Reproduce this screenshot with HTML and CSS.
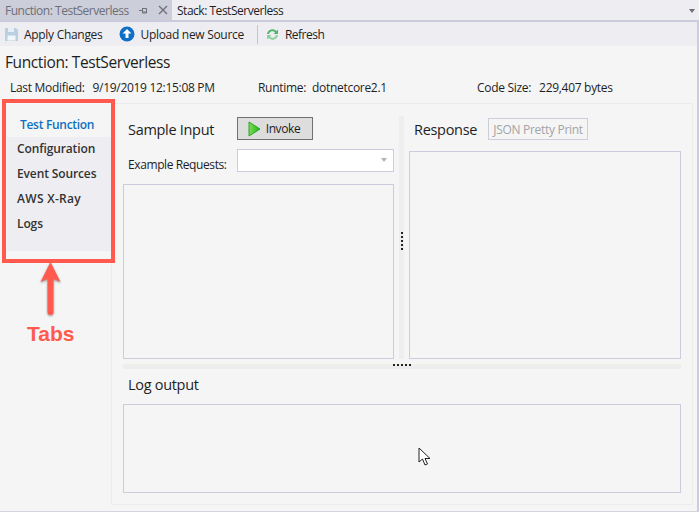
FILE: index.html
```html
<!DOCTYPE html>
<html lang="en">
<head>
    <meta charset="UTF-8">
    <meta name="viewport" content="width=device-width, initial-scale=1.0">
    <title>Function: TestServerless</title>
    <link rel="stylesheet" href="styles.css">
</head>
<body>
    <div class="tabstrip">
        <div class="doc-tab inactive">
            <span class="doc-tab-name">Function: TestServerless</span>
            <svg class="pin" width="9" height="9" viewBox="0 0 9 9"><path d="M0 4.500h3M3.500 2v5h4V2.500h-4M3.500 6h4" fill="none" stroke="#6d6e78"/></svg>
            <svg class="close" width="10" height="10" viewBox="0 0 10 10"><path d="M1 1l8 8M9 1l-8 8" stroke="#6d6e78" stroke-width="1.300"/></svg>
        </div>
        <div class="doc-tab active">Stack: TestServerless</div>
        <div class="strip-arrow"></div>
    </div>

    <div class="toolbar">
        <div class="tool disabled">
            <svg width="15" height="15" viewBox="0 0 15 15"><path d="M1 1h11l2 2v11H1z" fill="#b9cfe2"/><path d="M4 1h6v4H4z" fill="#e8eef4"/><path d="M3.500 8.500h8v5h-8z" fill="#f3f6f9"/></svg>
            <span>Apply Changes</span>
        </div>
        <div class="tool">
            <svg width="16" height="16" viewBox="0 0 16 16"><circle cx="8" cy="8" r="7.500" fill="#0f6fc6"/><path d="M8 3l4.500 4.500h-3V12h-3V7.500h-3z" fill="#fff"/></svg>
            <span>Upload new Source</span>
        </div>
        <div class="tool-sep"></div>
        <div class="tool">
            <svg width="15" height="15" viewBox="0 0 15 15"><path d="M2 7a5.500 5.500 0 0 1 9.500-3L13 2.500V7H8.500l1.600-1.600A3.500 3.500 0 0 0 4 7z" fill="#53b36b"/><path d="M13 8a5.500 5.500 0 0 1-9.500 3L2 12.500V8h4.500l-1.600 1.600A3.500 3.500 0 0 0 11 8z" fill="#8ccf9b"/></svg>
            <span class="refresh-label">Refresh</span>
        </div>
    </div>

    <div class="page">
        <h1 class="title">Function: TestServerless</h1>
        <div class="meta">
            <div class="meta-modified"><span class="meta-key">Last Modified:</span>9/19/2019 12:15:08 PM</div>
            <div class="meta-runtime"><span class="meta-key tight">Runtime:</span>dotnetcore2.1</div>
            <div class="meta-size"><span class="meta-key">Code Size:</span>229,407 bytes</div>
        </div>

        <div class="detail">
            <ul class="side-tabs">
                <li class="selected">Test Function</li>
                <li>Configuration</li>
                <li>Event Sources</li>
                <li class="xray">AWS X-Ray</li>
                <li>Logs</li>
            </ul>

            <div class="panel">
                <div class="panel-top">
                    <section class="input-col">
                        <div class="head-row">
                            <h2>Sample Input</h2>
                            <button class="invoke">
                                <svg width="13" height="16" viewBox="0 0 13 16"><defs><linearGradient id="play" x1="0" x2="1" y1="0" y2="0"><stop offset="0" stop-color="#7fdc5a"/><stop offset="1" stop-color="#19b51a"/></linearGradient></defs><path d="M1 1l11 7-11 7z" fill="url(#play)" stroke="#2aa51f"/></svg>
                                Invoke
                            </button>
                        </div>
                        <div class="example-row">
                            <label>Example Requests:</label>
                            <div class="combo"><i></i></div>
                        </div>
                        <div class="box grow"></div>
                    </section>
                    <div class="v-split"><div class="v-dots"></div></div>
                    <section class="response-col">
                        <div class="head-row">
                            <h2>Response</h2>
                            <button class="pretty">JSON Pretty Print</button>
                        </div>
                        <div class="box grow"></div>
                    </section>
                </div>
                <div class="h-split"><div class="h-dots"></div></div>
                <h2 class="log-title">Log output</h2>
                <div class="box log-box"></div>
            </div>
        </div>
    </div>

    <!-- annotation drawn over the screenshot -->
    <div class="callout"></div>
    <svg class="callout-arrow" width="24" height="54" viewBox="0 0 24 54"><path d="M12.500 0L2.500 20 9.500 17V50a3 3 0 0 0 6 0V17L22.500 20z" fill="#ff5a4d"/></svg>
    <div class="callout-label">Tabs</div>
    <svg class="cursor" width="13" height="20" viewBox="0 0 13 20"><path d="M1 1v14l3.500-3 2.500 6 2.500-1-2.500-5.500H12z" fill="#fff" stroke="#222"/></svg>
</body>
</html>
```

FILE: styles.css
```css
body {
    margin: 0;
    height: 512px;
    overflow: hidden;
    position: relative;
    display: flex;
    flex-direction: column;
    font-family: "Open Sans", "Noto Sans", sans-serif;
    font-size: 12px;
    letter-spacing: -0.3px;
    color: #1e1e1e;
    background-color: #f5f5f5;
    border-bottom: 1px solid #d4d4dc;
    box-sizing: border-box;
}
h1, h2, ul {
    margin: 0;
    padding: 0;
    font-weight: normal;
}
.tabstrip {
    display: flex;
    flex: none;
    height: 20px;
    background-color: #eeeef2;
    border-bottom: 2px solid #c9cbdc;
    position: relative;
}
.doc-tab {
    display: flex;
    align-items: center;
    height: 20px;
    box-sizing: border-box;
    letter-spacing: -0.48px;
}
.doc-tab.inactive {
    width: 172px;
    padding-left: 5px;
    background-color: #ccced9;
    color: #6d6e78;
}
.doc-tab-name {
    width: 134px;
}
.pin {
    margin-right: 10px;
}
.doc-tab.active {
    padding-left: 5px;
    background-color: #eeeef2;
}
.strip-arrow {
    position: absolute;
    right: 4px;
    top: 9px;
    border-top: 4px solid #6d6e78;
    border-left: 3.500px solid transparent;
    border-right: 3.500px solid transparent;
}
.toolbar {
    display: flex;
    align-items: center;
    flex: none;
    height: 24px;
    padding-left: 4px;
    background-color: #eeeef2;
    border-right: 2px solid #ccccdf;
}
.tool {
    display: flex;
    align-items: center;
    gap: 5px;
    margin-right: 15px;
}
.tool.disabled {
    margin-right: 17px;
}
.tool-sep {
    width: 1px;
    height: 19px;
    background-color: #c3c5cc;
    margin-left: -2px;
    margin-right: 7px;
}
.refresh-label {
    letter-spacing: -0.5px;
}
.page {
    flex: 1;
    min-height: 0;
    display: flex;
    flex-direction: column;
    border-right: 2px solid #ccccdf;
}
.title {
    font-size: 15.500px;
    line-height: 20px;
    margin: 6px 0 0 5px;
    letter-spacing: -0.4px;
}
.meta {
    display: flex;
    height: 20px;
    line-height: 20px;
    margin-top: 6px;
    margin-bottom: 5px;
    padding-left: 10px;
}
.meta-key {
    margin-right: 8px;
}
.meta-key.tight {
    margin-right: 6px;
}
.meta-modified {
    width: 248px;
}
.meta-runtime {
    width: 219px;
}
.detail {
    flex: 1;
    min-height: 0;
    display: flex;
    margin-left: 7px;
    margin-right: 4px;
    margin-bottom: 6px;
}
.side-tabs {
    list-style: none;
    width: 104px;
    height: 140px;
    margin-top: 8px;
    background-color: #eeeef2;
    font-weight: 600;
    color: #333;
    letter-spacing: -0.12px;
}
.side-tabs li {
    height: 25px;
    line-height: 24px;
    padding-left: 10px;
}
.side-tabs li.selected {
    height: 26px;
    line-height: 27px;
    margin-bottom: -1px;
    padding-left: 13px;
    color: #0e70c0;
    background-color: #f5f5f5;
    letter-spacing: -0.3px;
}
.side-tabs li:nth-child(2) {
    margin-top: 1px;
}
.side-tabs li.xray {
    letter-spacing: 0.3px;
}
.panel {
    flex: 1;
    min-width: 0;
    display: flex;
    flex-direction: column;
    padding: 0 11px 11px 11px;
    border: 1px solid #ececef;
}
.panel-top {
    display: flex;
    height: 256px;
    margin-top: 1px;
}
.input-col {
    width: 271px;
    display: flex;
    flex-direction: column;
    padding-top: 12px;
}
.response-col {
    flex: 1;
    display: flex;
    flex-direction: column;
    padding-top: 13px;
}
.head-row {
    display: flex;
    align-items: center;
    height: 22px;
}
.input-col .head-row {
    height: 23px;
}
h2 {
    font-size: 14.500px;
    letter-spacing: -0.3px;
}
.input-col h2 {
    width: 114px;
    padding-left: 5px;
    padding-top: 1px;
    box-sizing: border-box;
}
.response-col h2 {
    width: 79px;
    padding-left: 5px;
    box-sizing: border-box;
}
button {
    font-family: inherit;
    font-size: 12px;
    letter-spacing: -0.3px;
    padding: 0;
    display: flex;
    align-items: center;
    justify-content: center;
    box-sizing: border-box;
}
.invoke {
    width: 76px;
    height: 23px;
    gap: 5px;
    padding-right: 2px;
    color: #1e1e1e;
    background-color: #dddddd;
    border: 1px solid #707070;
    letter-spacing: -0.4px;
}
.pretty {
    width: 100px;
    height: 22px;
    color: #a2a4a5;
    background-color: #f5f5f5;
    border: 1px solid #ccced9;
}
.example-row {
    display: flex;
    align-items: center;
    height: 23px;
    margin-top: 9px;
    margin-bottom: 12px;
}
.example-row label {
    width: 114px;
    padding-left: 5px;
    padding-top: 8px;
    box-sizing: border-box;
    letter-spacing: -0.4px;
}
.combo {
    flex: 1;
    height: 23px;
    box-sizing: border-box;
    background-color: #fff;
    border: 1px solid #ccccdf;
    position: relative;
}
.combo i {
    position: absolute;
    right: 6px;
    top: 8px;
    border-top: 4px solid #b4b4b4;
    border-left: 3.500px solid transparent;
    border-right: 3.500px solid transparent;
}
.box {
    border: 1px solid #ccccdf;
    box-sizing: border-box;
}
.grow {
    flex: 1;
}
.response-col .box {
    margin-top: 11px;
}
.v-split {
    width: 5px;
    margin: 11px 5px 0;
    background-color: #eeeeef;
    position: relative;
}
.v-dots {
    position: absolute;
    left: 2px;
    top: 116px;
    width: 2px;
    height: 18px;
    background: repeating-linear-gradient(#222 0 2px, transparent 2px 4px);
}
.h-split {
    height: 5px;
    margin-top: 5px;
    background-color: #ededf0;
    border-top: 2px solid #efefe8;
    box-sizing: border-box;
    position: relative;
}
.h-dots {
    position: absolute;
    left: 270px;
    top: -2px;
    width: 18px;
    height: 2px;
    background: repeating-linear-gradient(90deg, #222 0 2px, transparent 2px 4px);
}
.log-title {
    height: 35px;
    line-height: 32px;
    padding-left: 5px;
}
.log-box {
    height: 90px;
}
.callout {
    position: absolute;
    left: 2px;
    top: 99px;
    width: 105px;
    height: 156px;
    border: 4px solid #ff5a4d;
}
.callout-arrow {
    position: absolute;
    left: 38px;
    top: 262px;
    filter: drop-shadow(0 1px 1px rgba(0, 0, 0, 0.4));
}
.callout-label {
    position: absolute;
    left: 27px;
    top: 321px;
    font-family: "Liberation Sans", Arial, sans-serif;
    font-size: 21px;
    line-height: 26px;
    font-weight: bold;
    letter-spacing: 0;
    color: #ff5a4d;
}
.cursor {
    position: absolute;
    left: 418px;
    top: 447px;
}
```
